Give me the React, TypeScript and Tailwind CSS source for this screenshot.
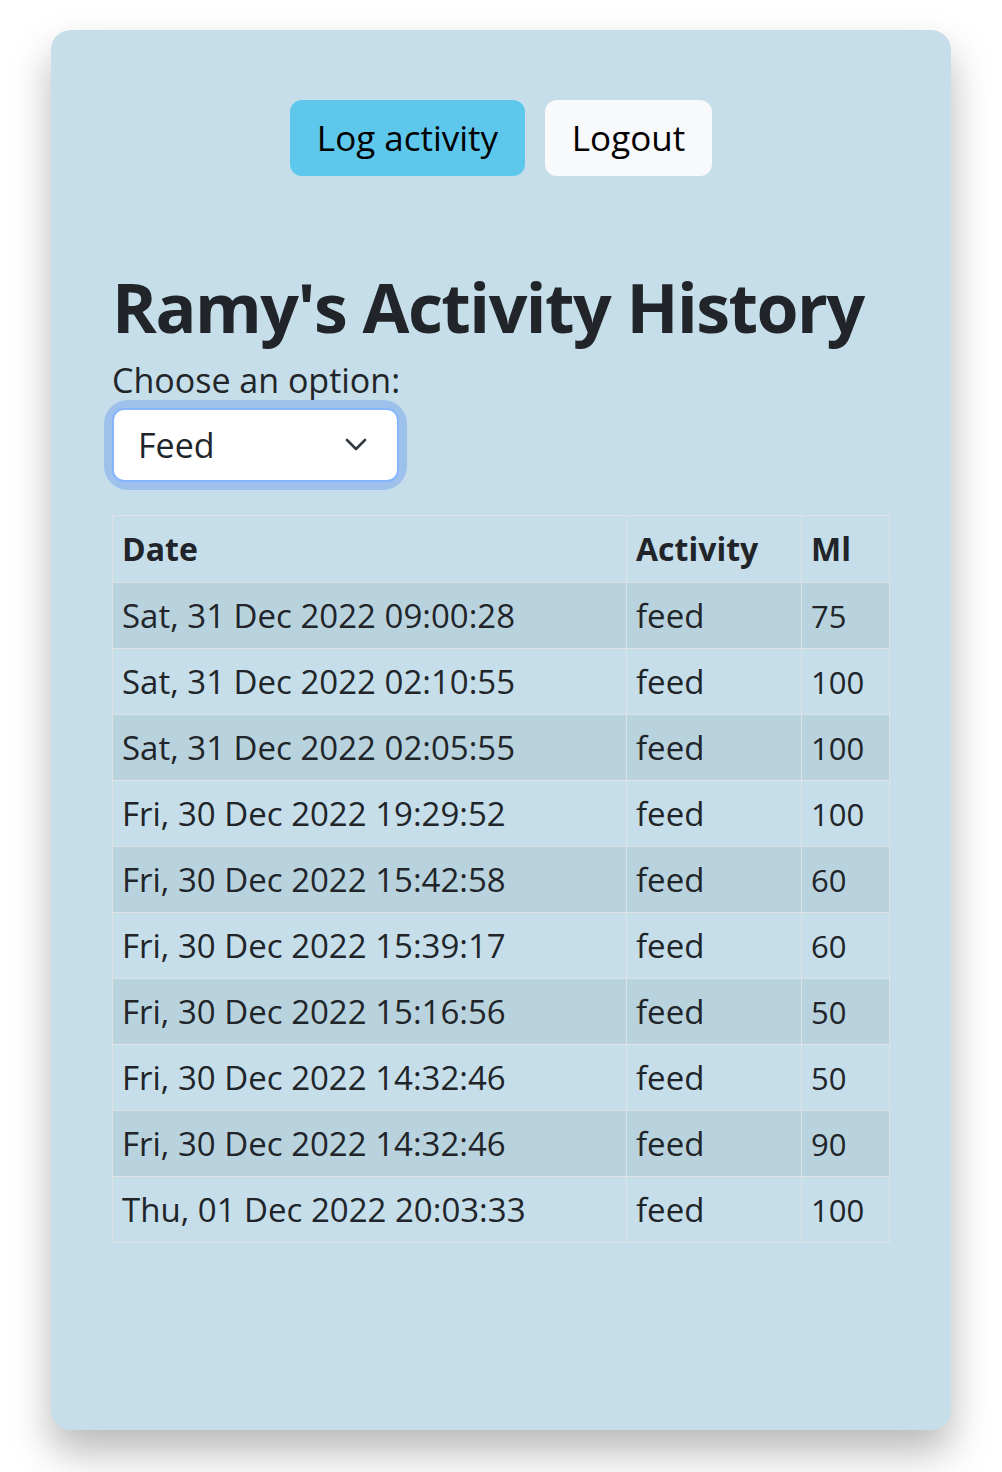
import React from 'react';

interface Entry {
  date: string;
  activity: string;
  ml: number;
}

const ENTRIES: Entry[] = [
  { date: 'Sat, 31 Dec 2022 09:00:28', activity: 'feed', ml: 75 },
  { date: 'Sat, 31 Dec 2022 02:10:55', activity: 'feed', ml: 100 },
  { date: 'Sat, 31 Dec 2022 02:05:55', activity: 'feed', ml: 100 },
  { date: 'Fri, 30 Dec 2022 19:29:52', activity: 'feed', ml: 100 },
  { date: 'Fri, 30 Dec 2022 15:42:58', activity: 'feed', ml: 60 },
  { date: 'Fri, 30 Dec 2022 15:39:17', activity: 'feed', ml: 60 },
  { date: 'Fri, 30 Dec 2022 15:16:56', activity: 'feed', ml: 50 },
  { date: 'Fri, 30 Dec 2022 14:32:46', activity: 'feed', ml: 50 },
  { date: 'Fri, 30 Dec 2022 14:32:46', activity: 'feed', ml: 90 },
  { date: 'Thu, 01 Dec 2022 20:03:33', activity: 'feed', ml: 100 },
];

export default function App() {
  return (
    <div className="min-h-screen bg-white pt-[30px] font-['Open_Sans',sans-serif] text-[#212529]">
      <div className="mx-auto flex h-[1400px] w-[900px] flex-col rounded-[20px] bg-[#c5dee9] px-[61px] pt-[70px] shadow-[0_22px_40px_rgba(0,0,0,0.28)]">
        {/* Top actions */}
        <div className="flex justify-center gap-5">
          <button className="h-[76px] w-[235px] rounded-xl bg-[#5dc8ec] text-[35px] text-black">
            Log activity
          </button>
          <button className="h-[76px] w-[167px] rounded-xl bg-[#f8f9fa] text-[35px] text-black">
            Logout
          </button>
        </div>

        <h1 className="mt-[90px] text-[68px] font-bold leading-[1.2] tracking-[-1.5px]">
          Ramy's Activity History
        </h1>

        <label className="mt-[12px] text-[34px] leading-[1.2]">Choose an option:</label>

        <div className="mt-[8px] self-start rounded-[16px] shadow-[0_0_0_8px_#9ec1ec]">
          <div className="flex h-[74px] w-[287px] items-center justify-between rounded-[12px] border-2 border-[#86b7fe] bg-white pl-[24px] pr-[30px]">
            <span className="text-[34px]">Feed</span>
            <svg width="22" height="14" viewBox="0 0 22 14" fill="none">
              <path d="M2 2l9 9 9-9" stroke="#343a40" strokeWidth="2.6" strokeLinecap="round" strokeLinejoin="round" />
            </svg>
          </div>
        </div>

        <table className="mt-[33px] w-full border-collapse border border-[#dee2e6]">
          <thead>
            <tr className="h-[67px]">
              <th className="border border-[#dee2e6] px-[9px] text-left text-[32px] font-bold">Date</th>
              <th className="w-[175px] border border-[#dee2e6] px-[9px] text-left text-[32px] font-bold">Activity</th>
              <th className="w-[88px] border border-[#dee2e6] px-[9px] text-left text-[32px] font-bold">Ml</th>
            </tr>
          </thead>
          <tbody>
            {ENTRIES.map((e, i) => (
              <tr key={i} className={`h-[66px] ${i % 2 === 0 ? 'bg-[#b9d3de]' : ''}`}>
                <td className="border border-[#dee2e6] px-[9px] text-[33px]">{e.date}</td>
                <td className="border border-[#dee2e6] px-[9px] text-[33px]">{e.activity}</td>
                <td className="border border-[#dee2e6] px-[9px] text-[31px]">{e.ml}</td>
              </tr>
            ))}
          </tbody>
        </table>
      </div>
    </div>
  );
}
